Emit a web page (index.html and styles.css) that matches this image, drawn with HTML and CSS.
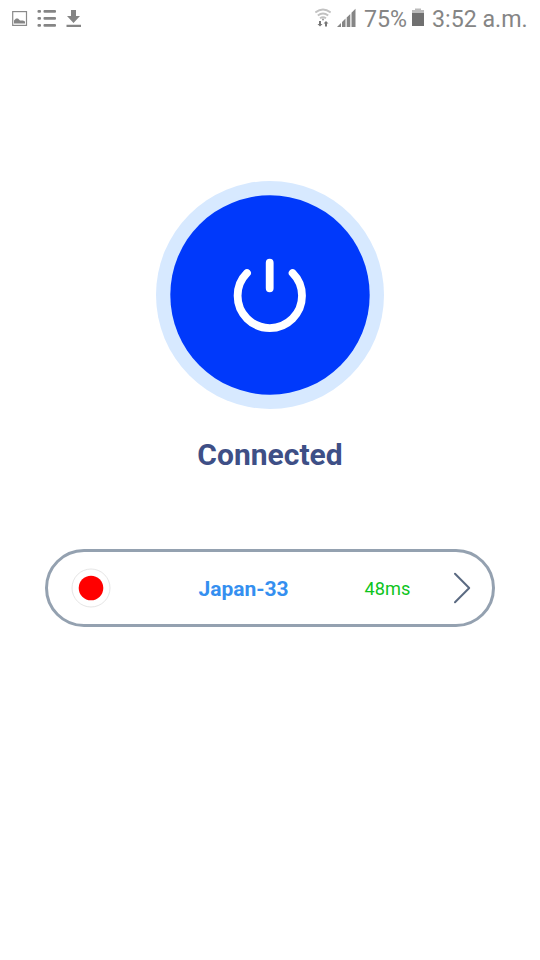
FILE: index.html
```html
<!DOCTYPE html>
<html lang="en">
<head>
<meta charset="utf-8">
<title>Connected</title>
<link rel="stylesheet" href="styles.css">
</head>
<body>
<header class="status">
  <svg class="notifications" width="74" height="20" viewBox="0 0 74 20">
    <rect x=".7" y="3.600" width="13.800" height="13.800" fill="none" stroke="#8a8a8a" stroke-width="1.200"/>
    <path d="M2 15.500v-3l2-2h2l2 2h3l2 1v2z" fill="#858585"/>
    <g fill="#858585">
      <rect x="25.500" y="2" width="3.500" height="2.800" rx="1"/><rect x="31.500" y="2" width="12.500" height="2.800" rx="1"/>
      <rect x="25.500" y="9" width="3.500" height="2.800" rx="1"/><rect x="31.500" y="9" width="12.500" height="2.800" rx="1"/>
      <rect x="25.500" y="16" width="3.500" height="2.800" rx="1"/><rect x="31.500" y="16" width="12.500" height="2.800" rx="1"/>
      <path d="M59 2h5v6h4l-6.500 7-6.500-7h4zM54.500 16.700h14.500v2.200h-14.500z"/>
    </g>
  </svg>
  <div class="system">
    <svg class="wifi" width="16" height="20" viewBox="0 0 16 20">
      <g fill="none" stroke="#c2c2c2" stroke-width="1.900">
        <path d="M.3 4.500q7.700-6 15.400 0"/><path d="M2.800 7.500q5.200-4 10.400 0"/><path d="M5 10.200q3-2 6 0"/>
      </g>
      <circle cx="8" cy="11.500" r="1" fill="#999"/>
      <path d="M4 13h2v3h1.500L5 18.500 2.500 16H4zM10 18.500h2v-3h1.500L11 13l-2.500 2.500H10z" fill="#777"/>
    </svg>
    <svg class="signal" width="20" height="20" viewBox="0 0 20 20">
      <path d="M0 19l4-4V19zM5 14l3.500-3.500V19H5zM9.700 9.500l3.600-3.600V19H9.700zM14.500 4.800L18.500 .8V19h-4z" fill="#858585"/>
    </svg>
    <span class="charge">75%</span>
    <svg class="battery" width="12" height="20" viewBox="0 0 12 20">
      <path d="M0 2h3V.5h6V2h3v4H0z" fill="#bbb"/><path d="M0 5h12v13H0z" fill="#707070"/>
    </svg>
    <span class="clock">3:52 a.m.</span>
  </div>
</header>
<main class="screen">
  <svg class="power" width="228" height="228" viewBox="0 0 228 228">
    <circle cx="114" cy="114" r="114" fill="#d7e9ff"/>
    <circle cx="114" cy="114" r="99.700" fill="#0039fb"/>
    <path d="M91 92.100A32.200 32.200 0 1 0 136.600 92.100M113.700 81.700V107.300" fill="none" stroke="#fff" stroke-width="7.800" stroke-linecap="round"/>
  </svg>
  <h1 class="state">Connected</h1>
  <div class="server">
    <svg class="flag" width="40" height="40" viewBox="0 0 40 40">
      <circle cx="20" cy="20" r="19" fill="#fff" stroke="#d4d4d4" stroke-width=".6"/>
      <circle cx="20" cy="20" r="12.300" fill="#f00"/>
    </svg>
    <span class="name">Japan-33</span>
    <span class="ping">48ms</span>
    <svg class="chevron" width="20" height="32" viewBox="0 0 20 32">
      <path d="M2 1.700L16.200 16 2 30.300" fill="none" stroke="#5b6a82" stroke-width="2" stroke-linecap="round" stroke-linejoin="round"/>
    </svg>
  </div>
</main>
</body>
</html>
```
FILE: styles.css
```css
body {
  margin: 0;
  width: 540px;
  height: 960px;
  background: #fff;
  font-family: Roboto, "Liberation Sans", sans-serif;
}
.status {
  display: flex;
  justify-content: space-between;
  height: 38px;
  box-sizing: border-box;
  padding: 8px 12px 0;
  color: #858585;
  font-size: 23.200px;
  line-height: 23px;
}
.system { display: flex; white-space: nowrap; }
.signal { margin-left: 6px; }
.charge { margin-left: 7px; width: 48px; }
.clock { margin-left: 8px; width: 96px; }
.screen {
  display: flex;
  flex-direction: column;
  align-items: center;
  padding-top: 143px;
}
.state {
  margin: 28px 0 0;
  color: #3e4f86;
  font-size: 30px;
  line-height: 36px;
  font-weight: 700;
}
.server {
  display: flex;
  align-items: center;
  box-sizing: border-box;
  width: 450px;
  height: 78px;
  margin-top: 76px;
  padding-left: 23.500px;
  border: 3px solid #94a1b0;
  border-radius: 39px;
}
.flag { margin: -1px 0 0 -.5px; }
.name {
  width: 166px;
  margin-left: 87.500px;
  color: #348ff0;
  font-size: 21px;
  font-weight: 700;
  padding-top: 2px;
}
.ping {
  width: 88px;
  color: #0dc41d;
  font-size: 18.200px;
  padding-top: 1px;
}
```
